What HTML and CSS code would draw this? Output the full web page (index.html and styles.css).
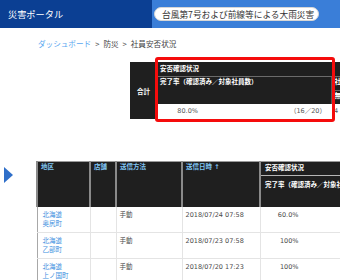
FILE: index.html
```html
<!DOCTYPE html>
<html lang="ja">
<head>
    <meta charset="UTF-8">
    <meta name="viewport" content="width=device-width, initial-scale=1.0">
    <title>社員安否状況 - 災害ポータル</title>
    <link rel="stylesheet" href="styles.css">
</head>
<body>
    <header class="topbar">
        <div class="brand">災害ポータル</div>
        <div class="event">
            <span class="event-pill">台風第7号および前線等による大雨災害</span>
        </div>
    </header>

    <nav class="crumbs">
        <a href="#">ダッシュボード</a><span class="sep">&gt;</span>防災<span class="sep">&gt;</span>社員安否状況
    </nav>

    <section class="summary">
        <table class="sum">
            <colgroup>
                <col class="c-total">
                <col class="c-rate">
                <col class="c-other">
            </colgroup>
            <tr>
                <th rowspan="4" class="total">合計</th>
                <th colspan="2" class="group">安否確認状況</th>
            </tr>
            <tr>
                <th rowspan="2" class="rate-h">完了率（確認済み／対象社員数）</th>
                <th class="sub">社員数</th>
            </tr>
            <tr>
                <th class="sub">無回答</th>
            </tr>
            <tr class="data">
                <td class="rate"><span class="pct">80.0%</span><span class="cnt">（16／20）</span></td>
                <td>4</td>
            </tr>
        </table>
        <div class="highlight"></div>
    </section>

    <section class="list">
        <span class="toggle"></span>
        <table class="grid">
            <colgroup>
                <col class="c-area">
                <col class="c-shop">
                <col class="c-method">
                <col class="c-date">
                <col class="c-status">
            </colgroup>
            <thead>
                <tr>
                    <th rowspan="2" class="area"><a href="#">地区</a></th>
                    <th rowspan="2"><a href="#">店舗</a></th>
                    <th rowspan="2"><a href="#">送信方法</a></th>
                    <th rowspan="2"><a href="#">送信日時 ↑</a></th>
                    <th class="group">安否確認状況</th>
                </tr>
                <tr>
                    <th class="rate-h">完了率（確認済み／対象社員数）</th>
                </tr>
            </thead>
            <tbody>
                <tr>
                    <td class="area"><a href="#">北海道<br>奥尻町</a></td>
                    <td></td>
                    <td>手動</td>
                    <td>2018/07/24 07:58</td>
                    <td class="rate"><span class="pct">60.0%</span><span class="cnt">（3／5）</span></td>
                </tr>
                <tr>
                    <td class="area"><a href="#">北海道<br>乙部町</a></td>
                    <td></td>
                    <td>手動</td>
                    <td>2018/07/23 07:58</td>
                    <td class="rate"><span class="pct">100%</span><span class="cnt">（6／6）</span></td>
                </tr>
                <tr>
                    <td class="area"><a href="#">北海道<br>上ノ国町</a></td>
                    <td></td>
                    <td>手動</td>
                    <td>2018/07/20 17:23</td>
                    <td class="rate"><span class="pct">100%</span><span class="cnt">（7／7）</span></td>
                </tr>
            </tbody>
        </table>
    </section>
</body>
</html>
```

FILE: styles.css
```css
:root {
    --navy: #0b3f93;
    --blue: #3a7ed8;
    --dark: #1f1f1f;
    --link: #3d8fe0;
    --head-link: #7fc4f2;
    --text: #4a4a4a;
    --line: #e4e4e4;
}

* {
    margin: 0;
    padding: 0;
    box-sizing: border-box;
}

body {
    font-family: "DejaVu Sans", "Noto Sans CJK JP", sans-serif;
    color: var(--text);
    background: #fff;
    width: 340px;
    height: 280px;
    overflow: hidden;
}

a {
    text-decoration: none;
}

/* ヘッダー */
.topbar {
    display: flex;
    height: 28px;
}

.brand {
    width: 152px;
    background: var(--navy);
    color: #fff;
    font-family: "Noto Sans CJK JP", sans-serif;
    font-size: 9.2px;
    padding-left: 8px;
    display: flex;
    align-items: center;
}

.event {
    flex: 1;
    background: var(--blue);
    display: flex;
    align-items: center;
    padding-left: 2px;
}

.event-pill {
    background: #fff;
    border: 1px solid #d6d6d6;
    border-radius: 7px;
    height: 14px;
    padding: 0 4px 0 7px;
    font-family: "Noto Sans CJK JP", sans-serif;
    font-size: 8.7px;
    color: #333;
    display: flex;
    align-items: center;
}

/* パンくず */
.crumbs {
    margin-top: 10px;
    padding-left: 38px;
    height: 11px;
    line-height: 11px;
    font-family: "Noto Sans CJK JP", sans-serif;
    font-size: 7.6px;
    color: #444;
}

.crumbs a {
    color: #5aa7f0;
}

.crumbs .sep {
    margin: 0 4px;
}

/* 合計 */
.summary {
    position: relative;
    margin-top: 13px;
    padding-left: 130px;
}

.sum {
    table-layout: fixed;
    width: 281px;
    border-collapse: collapse;
    font-size: 6.5px;
    line-height: 9px;
}

.c-total { width: 27px; }
.c-rate { width: 174px; }
.c-other { width: 80px; }

.sum th {
    background: var(--dark);
    color: #fff;
    font-weight: bold;
    text-align: left;
    vertical-align: top;
    padding: 0 3px;
}

.sum .total {
    text-align: center;
    vertical-align: middle;
    padding-top: 4px;
}

.sum .group {
    height: 14px;
    padding-top: 3px;
    border-bottom: 1px solid #6b6b6b;
}

.sum .rate-h {
    padding-top: 1px;
}

.sum .sub {
    height: 14px;
    padding-top: 1px;
    border-left: 1px solid #555;
}

.sum .sub + .sub,
.sum tr:nth-child(3) .sub {
    border-top: 1px solid #6b6b6b;
}

.sum .data td {
    background: #fff;
    color: #555;
    height: 15px;
    padding: 0 5px 0 3px;
}

.rate {
    white-space: nowrap;
}

.rate .pct {
    display: inline-block;
    width: 38px;
    text-align: right;
}

.sum .rate .cnt {
    float: right;
}

.highlight {
    position: absolute;
    left: 155px;
    top: -5px;
    width: 180px;
    height: 65px;
    border: 3px solid #f50c0c;
    border-radius: 3px;
}

/* 一覧 */
.list {
    display: flex;
    align-items: flex-start;
    margin-top: 42px;
    padding-left: 4px;
}

.toggle {
    flex: none;
    margin-top: 6px;
    width: 0;
    height: 0;
    border-left: 9px solid #2f6fc9;
    border-top: 8px solid transparent;
    border-bottom: 8px solid transparent;
}

.grid {
    flex: none;
    margin-left: 23px;
    table-layout: fixed;
    width: 403px;
    border-collapse: collapse;
    border-left: 1px solid #a8a8a8;
    font-size: 6.5px;
    line-height: 9.5px;
}

.c-area { width: 53px; }
.c-shop { width: 26px; }
.c-method { width: 66px; }
.c-date { width: 78px; }
.c-status { width: 180px; }

.grid th {
    background: var(--dark);
    color: #fff;
    font-weight: bold;
    text-align: left;
    vertical-align: top;
    padding: 1px 3px 0;
    border-top: 1px solid #9a9a9a;
    border-left: 2px solid #8a8a8a;
    border-right: 2px solid #8a8a8a;
}

.grid th a {
    color: var(--head-link);
}

.grid th.group {
    height: 14px;
    padding-top: 2px;
    padding-left: 4px;
    border-bottom: 1px solid #b5b5b5;
}

.grid th.rate-h {
    height: 31px;
    padding-top: 5px;
    padding-left: 4px;
    border-top: none;
}

.grid td {
    vertical-align: top;
    padding: 4px 3px 2px;
    border-bottom: 1px solid var(--line);
    border-right: 1px solid var(--line);
    color: var(--text);
    white-space: nowrap;
}

.grid td.area {
    padding-left: 5px;
}

.grid td a {
    color: var(--link);
}

.grid td.rate {
    padding-left: 0;
}

.grid .rate .cnt {
    margin-left: 100px;
}
```
